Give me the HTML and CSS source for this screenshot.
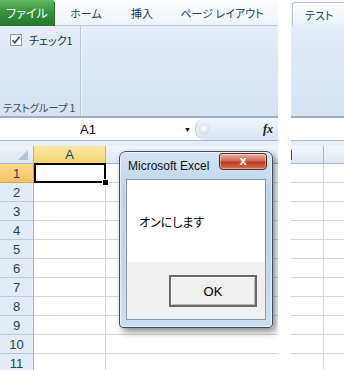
FILE: index.html
```html
<!DOCTYPE html>
<html lang="ja">

<head>
    <meta charset="UTF-8">
    <title>Excel - テスト</title>
    <link rel="stylesheet" href="styles.css">
</head>

<body>
    <div class="screen">
        <section class="pane pane-left">
            <div class="tabs">
                <div class="tab tab-file">ファイル</div>
                <div class="tab tab-home">ホーム</div>
                <div class="tab tab-insert">挿入</div>
                <div class="tab tab-layout">ページ レイアウト</div>
            </div>
            <div class="ribbon">
                <div class="group">
                    <label class="check">
                        <span class="box">
                            <svg width="12" height="12" viewBox="0 0 12 12">
                                <path d="M2.5 6.2 L4.8 8.8 L9.5 2.8" fill="none" stroke="#2a4a73" stroke-width="1.6" />
                            </svg>
                        </span>
                        チェック1
                    </label>
                    <div class="group-label">テストグループ 1</div>
                </div>
            </div>
            <div class="formula">
                <div class="namebox">
                    <span class="cellref">A1</span>
                    <span class="drop">▼</span>
                </div>
                <div class="fx-area">
                    <span class="knob"></span>
                    <span class="fx">fx</span>
                </div>
            </div>
            <div class="band"></div>
            <div class="sheet">
                <div class="row head">
                    <div class="rh corner">
                        <svg width="10" height="10" viewBox="0 0 10 10"><path d="M10 0 L10 10 L0 10 Z" fill="#b3c4d8" /></svg>
                    </div>
                    <div class="c ca hsel">A</div>
                    <div class="c cb"></div>
                </div>
                <div class="row"><div class="rh rsel">1</div><div class="c ca active"></div><div class="c cb"></div></div>
                <div class="row"><div class="rh">2</div><div class="c ca"></div><div class="c cb"></div></div>
                <div class="row"><div class="rh">3</div><div class="c ca"></div><div class="c cb"></div></div>
                <div class="row"><div class="rh">4</div><div class="c ca"></div><div class="c cb"></div></div>
                <div class="row"><div class="rh">5</div><div class="c ca"></div><div class="c cb"></div></div>
                <div class="row"><div class="rh">6</div><div class="c ca"></div><div class="c cb"></div></div>
                <div class="row"><div class="rh">7</div><div class="c ca"></div><div class="c cb"></div></div>
                <div class="row"><div class="rh">8</div><div class="c ca"></div><div class="c cb"></div></div>
                <div class="row"><div class="rh">9</div><div class="c ca"></div><div class="c cb"></div></div>
                <div class="row"><div class="rh">10</div><div class="c ca"></div><div class="c cb"></div></div>
                <div class="row"><div class="rh">11</div><div class="c ca"></div><div class="c cb"></div></div>
            </div>

            <div class="dialog">
                <div class="dialog-title">Microsoft Excel</div>
                <div class="close">x</div>
                <div class="client">
                    <div class="msg">オンにします</div>
                    <div class="actions">
                        <button type="button" class="ok">OK</button>
                    </div>
                </div>
            </div>
        </section>

        <div class="gap"></div>

        <section class="pane pane-right">
            <div class="tabs tabs-right">
                <div class="tab tab-test">テスト</div>
            </div>
            <div class="ribbon"></div>
            <div class="formula formula-right"></div>
            <div class="band"></div>
            <div class="sheet">
                <div class="row head">
                    <div class="c cr1"><span class="frag"></span></div>
                    <div class="c cb"></div>
                </div>
                <div class="row"><div class="c cr1"></div><div class="c cb"></div></div>
                <div class="row"><div class="c cr1"></div><div class="c cb"></div></div>
                <div class="row"><div class="c cr1"></div><div class="c cb"></div></div>
                <div class="row"><div class="c cr1"></div><div class="c cb"></div></div>
                <div class="row"><div class="c cr1"></div><div class="c cb"></div></div>
                <div class="row"><div class="c cr1"></div><div class="c cb"></div></div>
                <div class="row"><div class="c cr1"></div><div class="c cb"></div></div>
                <div class="row"><div class="c cr1"></div><div class="c cb"></div></div>
                <div class="row"><div class="c cr1"></div><div class="c cb"></div></div>
                <div class="row"><div class="c cr1"></div><div class="c cb"></div></div>
                <div class="row"><div class="c cr1"></div><div class="c cb"></div></div>
            </div>
        </section>
    </div>
</body>

</html>
```

FILE: styles.css
```css
body {
    margin: 0;
    background: #fff;
    font-family: "Noto Sans CJK JP", "Liberation Sans", sans-serif;
    font-feature-settings: "palt";
    color: #1e3a5f;
    overflow: hidden;
}

.screen {
    display: flex;
    width: 344px;
    height: 370px;
    overflow: hidden;
}

.pane {
    position: relative;
    overflow: hidden;
}

.pane-left {
    width: 278px;
}

.gap {
    width: 13px;
    background: #fff;
}

.pane-right {
    width: 53px;
}

/* tabs */
.tabs {
    height: 26px;
    box-sizing: border-box;
    border-bottom: 1px solid #b7c8dc;
    background: linear-gradient(#fdfeff, #eef3f9);
    display: flex;
    align-items: flex-end;
    font-size: 11px;
    color: #1e3a5f;
}

.tab {
    height: 25px;
    display: flex;
    align-items: center;
    justify-content: center;
    box-sizing: border-box;
}

.tab-file {
    width: 55px;
    height: 26px;
    margin-bottom: -1px;
    background: linear-gradient(#63b860, #34903a 50%, #287a2c);
    border-right: 1px solid #2d6e2d;
    border-bottom: 1px solid #2d6e2d;
    border-radius: 0 4px 0 0;
    color: #fff;
    font-size: 12px;
}

.tab-home {
    width: 62px;
}

.tab-insert {
    width: 50px;
}

.tab-layout {
    width: 110px;
}

.tabs-right {
    border-bottom: none;
}

.tab-test {
    flex: 1;
    height: 24px;
    margin-left: 1px;
    border: 1px solid #b4c5d9;
    border-bottom: none;
    border-right: none;
    border-radius: 3px 0 0 0;
    background: linear-gradient(#ffffff, #e8f0fa);
    justify-content: flex-start;
    padding-left: 12px;
}

/* ribbon */
.ribbon {
    height: 92px;
    box-sizing: border-box;
    border-bottom: 2px solid #9fb0c5;
    background: linear-gradient(#e4edf8, #d6e2f2);
    display: flex;
}

.group {
    width: 81px;
    border-right: 1px solid #b9c9dc;
    box-shadow: 1px 0 0 #eef4fb;
    display: flex;
    flex-direction: column;
    justify-content: space-between;
    padding: 8px 0 1px 0;
    box-sizing: border-box;
}

.check {
    display: flex;
    align-items: center;
    gap: 7px;
    padding-left: 10px;
    font-size: 11px;
    color: #1b2b40;
    height: 12px;
}

.box {
    width: 12px;
    height: 12px;
    box-sizing: border-box;
    border: 1px solid #8c95a1;
    background: linear-gradient(#f4f6f9, #fff);
    display: flex;
}

.box svg {
    margin: -1px;
}

.group-label {
    font-size: 10.5px;
    letter-spacing: -0.2px;
    color: #3b4c62;
    padding-left: 3px;
    white-space: nowrap;
}

/* formula bar */
.formula {
    height: 23px;
    box-sizing: border-box;
    border-bottom: 1px solid #a9b9cc;
    display: flex;
    background: #fff;
}

.namebox {
    width: 195px;
    display: flex;
    align-items: center;
    font-family: "Liberation Sans", sans-serif;
    font-size: 13px;
    color: #000;
}

.cellref {
    width: 176px;
    text-align: center;
}

.drop {
    margin-left: 8px;
    font-size: 7px;
}

.fx-area {
    flex: 1;
    background: linear-gradient(#f1f5fb, #d9e4f2);
    border-left: 1px solid #b8c7da;
    border-radius: 10px 0 0 10px;
    display: flex;
    align-items: center;
    justify-content: space-between;
    padding: 0 5px 0 4px;
}

.knob {
    width: 9px;
    height: 9px;
    border-radius: 50%;
    background: radial-gradient(circle at 40% 35%, #fff, #c9d3de);
    box-shadow: 0 0 0 1px #d7e0ea;
}

.fx {
    font-family: "Liberation Serif", serif;
    font-style: italic;
    font-weight: bold;
    font-size: 12px;
    color: #1a1a1a;
}

.band {
    height: 5px;
    background: #e7eef6;
}

/* grid */
.row {
    display: flex;
    height: 19px;
}

.row.head {
    height: 18px;
}

.rh {
    width: 34px;
    box-sizing: border-box;
    border-right: 1px solid #9eb6ce;
    border-bottom: 1px solid #b8cadf;
    background: #e3ebf6;
    display: flex;
    align-items: center;
    justify-content: center;
    font-family: "Liberation Sans", sans-serif;
    font-size: 13px;
    color: #21405f;
}

.rh.corner {
    align-items: flex-end;
    justify-content: flex-end;
    padding: 0 5px 3px 0;
    background: linear-gradient(#eef3f9, #dde6f1);
    border-bottom-color: #9eb6ce;
}

.rh.rsel {
    background: linear-gradient(#f9d98e, #f5c465);
    border-bottom-color: #d7a24a;
    border-right-color: #d7a24a;
}

.c {
    box-sizing: border-box;
    border-right: 1px solid #d6d6d6;
    border-bottom: 1px solid #d6d6d6;
}

.head .c {
    background: linear-gradient(#f2f6fb, #dde7f3);
    border-right-color: #9eb6ce;
    border-bottom-color: #9eb6ce;
    display: flex;
    align-items: center;
    justify-content: center;
    font-family: "Liberation Sans", sans-serif;
    font-size: 13px;
    color: #21405f;
}

.ca {
    width: 72px;
}

.cb {
    flex: 1;
    border-right: none;
}

.head .c.cb {
    border-right: none;
}

.cr1 {
    width: 33px;
}

.head .c.hsel {
    background: linear-gradient(#fbe8a6, #f6d46d);
    border-bottom-color: #d9a449;
}

.active {
    position: relative;
}

.active::after {
    content: '';
    position: absolute;
    left: 0;
    top: -1px;
    right: -1px;
    bottom: -1px;
    border: 2px solid #000;
}

.active::before {
    content: '';
    position: absolute;
    right: -4px;
    bottom: -4px;
    width: 5px;
    height: 5px;
    background: #000;
    border: 1px solid #fff;
    z-index: 1;
}

.head .cr1 {
    justify-content: flex-start;
}

.frag {
    width: 1px;
    height: 10px;
    background: #2c4868;
}

/* message box */
.dialog {
    position: absolute;
    left: 119px;
    top: 151px;
    width: 154px;
    height: 177px;
    box-sizing: border-box;
    border: 1px solid #3f4c59;
    border-radius: 7px 7px 4px 4px;
    background: linear-gradient(#d3e3f4, #bdd4ec 25%, #c3d8ef 70%, #cadff3);
    box-shadow: inset 0 0 0 1px rgba(255, 255, 255, 0.6), 3px 4px 7px rgba(0, 0, 0, 0.45);
    padding: 0 6px 7px 6px;
    display: flex;
    flex-direction: column;
    z-index: 5;
}

.dialog-title {
    height: 27px;
    display: flex;
    align-items: center;
    padding-left: 2px;
    font-family: "Liberation Sans", sans-serif;
    font-size: 12px;
    color: #111;
}

.close {
    position: absolute;
    top: 1px;
    left: 99px;
    width: 48px;
    height: 17px;
    box-sizing: border-box;
    border: 1px solid #5c2a22;
    border-radius: 3px 3px 4px 4px;
    background: linear-gradient(#eab0a2, #d26a52 45%, #b83a22 55%, #d9715a);
    box-shadow: inset 0 0 0 1px rgba(255, 255, 255, 0.35);
    color: #fff;
    font-family: "Liberation Sans", sans-serif;
    font-size: 13px;
    font-weight: bold;
    display: flex;
    align-items: center;
    justify-content: center;
    line-height: 1;
    padding-bottom: 2px;
}

.client {
    flex: 1;
    border: 1px solid #8797a8;
    background: #fff;
    display: flex;
    flex-direction: column;
}

.msg {
    height: 82px;
    display: flex;
    align-items: center;
    padding-left: 12px;
    font-size: 12px;
    color: #000;
}

.actions {
    flex: 1;
    background: #f0f0f0;
    display: flex;
    justify-content: flex-end;
    align-items: flex-start;
    padding: 13px 8px 0 0;
}

.ok {
    width: 88px;
    height: 32px;
    box-sizing: border-box;
    border: 2px solid #696969;
    background: #efefef;
    box-shadow: inset 1px 1px 0 #fff, inset -1px -1px 0 #b5b5b5;
    font-family: "Liberation Sans", sans-serif;
    font-size: 13px;
    color: #000;
    padding: 0;
}
```
